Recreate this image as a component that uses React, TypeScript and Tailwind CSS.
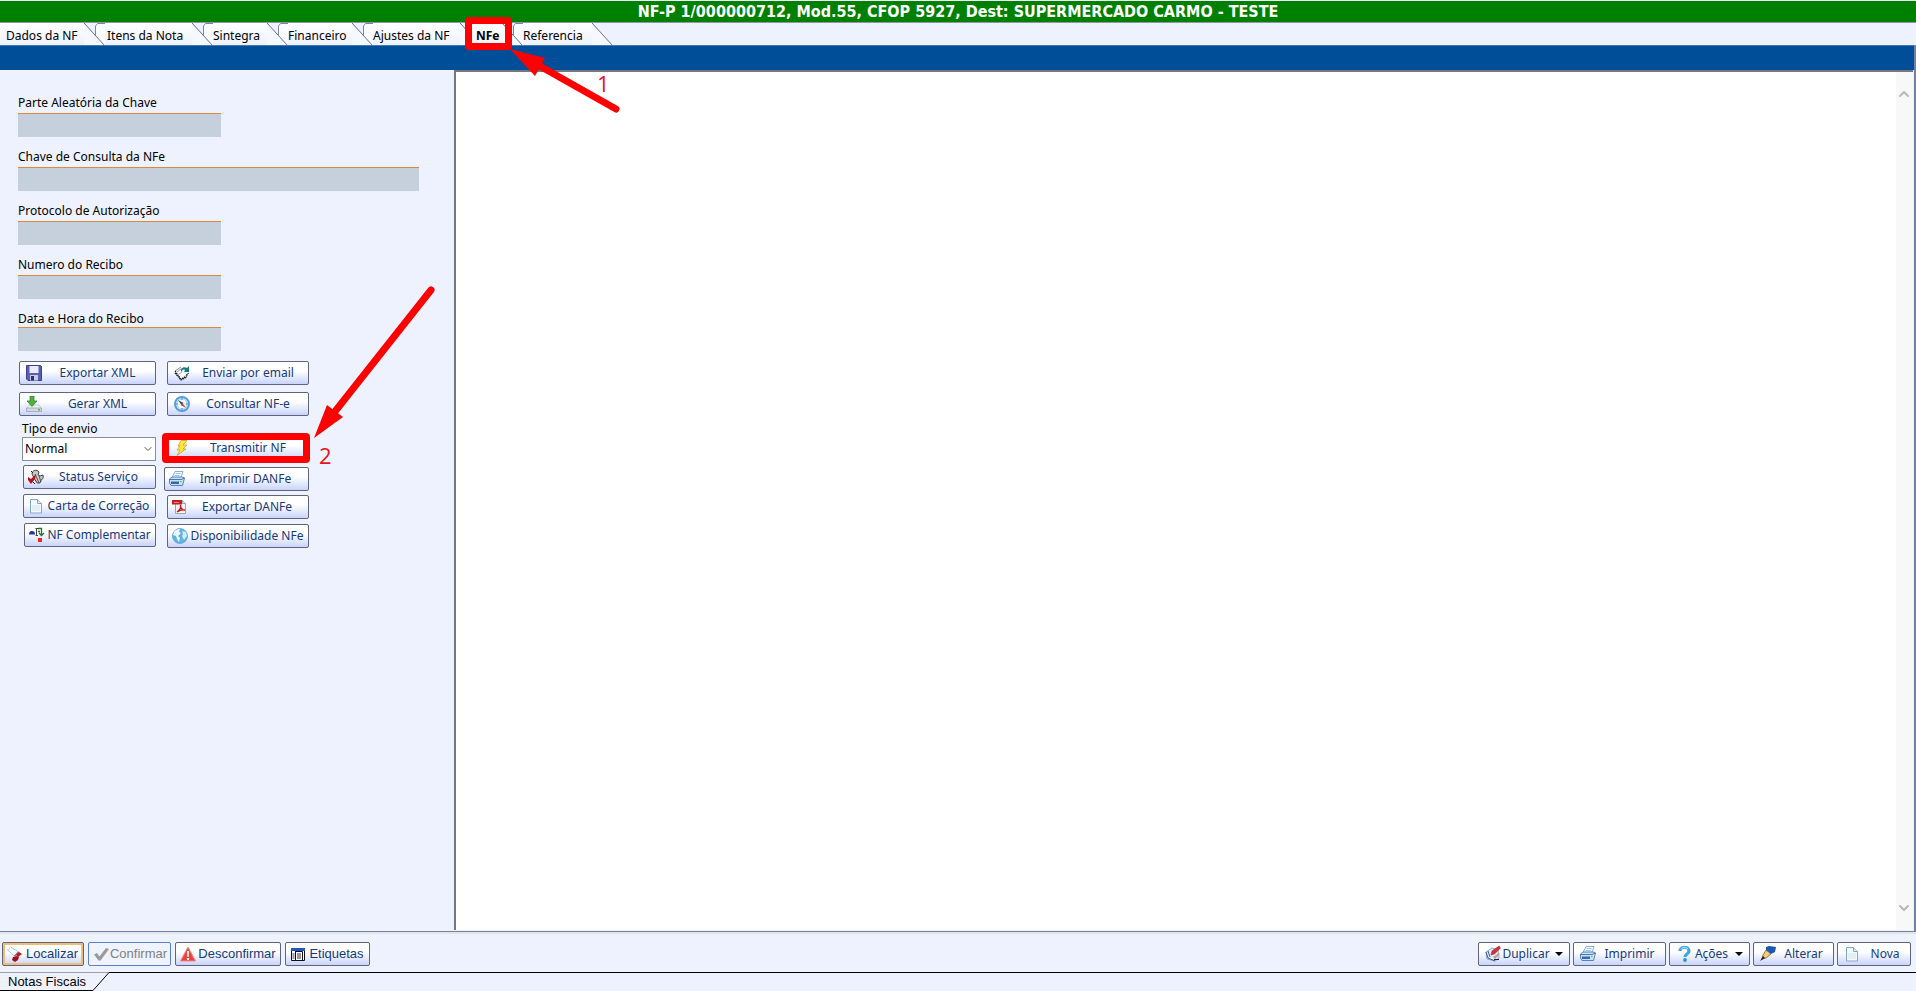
import React from "react";
import { ChevronDown, ChevronUp } from "lucide-react";
import clsx from "clsx";

const uiFont = "font-['Noto_Sans','DejaVu_Sans_Condensed',sans-serif]";
const titleFont = "font-['DejaVu_Sans_Condensed','DejaVu_Sans',sans-serif]";
const arial = "font-['Liberation_Sans',sans-serif]";

interface IconProps {
  children: React.ReactNode;
}

function Icon({ children }: IconProps) {
  return (
    <svg className="h-4 w-4 shrink-0" viewBox="0 0 16 16" aria-hidden="true">
      {children}
    </svg>
  );
}

const SaveIcon = () => (
  <Icon>
    <path d="M.5.500h14l1 1v14H2l-1.500-1.500z" fill="#5a5fb4" stroke="#3d4190" />
    <path d="M3.500 1h9v7h-9z" fill="#e9ecf8" />
    <path d="M4 10h8v5.500H4z" fill="#c9cde0" />
    <path d="M5 11h3v4.500H5z" fill="#2b2f70" />
  </Icon>
);

const MailIcon = () => (
  <Icon>
    <path d="M1 6l6-4 2 1-1 5 3 1 3 1-7 4z" fill="#fff" />
    <path d="M1 6l6-4" stroke="#888" fill="none" />
    <path d="M1 6l6 8 7-4M1 8l6 7 6-3" stroke="#1c1c1c" strokeWidth="1.200" fill="none" strokeDasharray="1.500 .7" />
    <path d="M3 7l4-3M5 9l3-2" stroke="#9aa" fill="none" />
    <path d="M7 4c2-2 4-2 6-1l2-2v6h-5l1-2c-2-1-3 0-3 2-1-1-2-2-1-3z" fill="#1b7a80" />
    <path d="M12 10l3-2" stroke="#333" />
  </Icon>
);

const DownloadIcon = () => (
  <Icon>
    <path d="M3 9h10l2.500 3.500H.5z" fill="#f0f2f5" stroke="#b9c0ca" strokeWidth=".8" />
    <path d="M.5 12h15v3.500H.5z" fill="#d4d9e0" stroke="#9aa3af" strokeWidth=".8" />
    <path d="M12 13h2v1.500h-2z" fill="#4bb54b" />
    <path d="M4 0h4v5h3L6 10.500 1 5h3z" fill="#4cb53c" stroke="#237a1e" strokeWidth=".7" />
  </Icon>
);

const CompassIcon = () => (
  <Icon>
    <circle cx="8" cy="8" r="7" fill="#d9ecfb" stroke="#559fd8" strokeWidth="2" />
    <circle cx="8" cy="8" r="5" fill="#f8fcff" stroke="#9cc6e8" strokeWidth=".7" />
    <path d="M4 4l5.500 3-2 2z" fill="#27486f" />
    <path d="M12 12L6.500 9l2-2z" fill="#b64b43" />
    <path d="M8 2v2M8 12v2M2 8h2M12 8h2" stroke="#3f87c4" />
  </Icon>
);

const BoltIcon = () => (
  <Icon>
    <path d="M7 .5h6L9 5h4l-4 4h3l-9 6.500L6 10H3l3-4H4z" fill="#fde64a" stroke="#cfa31a" strokeWidth=".8" />
  </Icon>
);

const ToolsIcon = () => (
  <Icon>
    <path d="M4 5c0-4 5-5 7-2l-1 3 2 1 3-1c1 3-1 5-2 5l-1 3H9L6 9z" fill="#c8c8c8" stroke="#333" strokeWidth=".9" />
    <path d="M7 5l4 9M11 7l2 6" stroke="#555" />
    <path d="M0 8l3 2 5-5-1 5-4 5-3-4z" fill="#b3121d" />
    <path d="M5 13l2 2M3 2l2 2" stroke="#222" />
  </Icon>
);

const PrinterIcon = () => (
  <Icon>
    <path d="M6 .5h8l-2 6H3z" fill="#f7fbff" stroke="#6b9bd1" strokeWidth=".8" />
    <path d="M6.500 2.500h5M5.500 4.500h5" stroke="#86b2df" strokeWidth=".8" />
    <path d="M3 6h10l2.500 1-2 7.500H2L.5 12V8z" fill="#c9e0f7" stroke="#4379b8" strokeWidth=".9" />
    <path d="M.5 8.500H12L15.500 7" stroke="#3a6da9" fill="none" strokeWidth=".9" />
    <path d="M2 10.500h8v2.500H2z" fill="#3568ab" />
    <path d="M11 10h1.500v1H11z" fill="#62c04b" />
  </Icon>
);

const PageIcon = () => (
  <Icon>
    <path d="M2.500 1.500h7l4 4v9.500h-11z" fill="#f5fafd" stroke="#7fa9c6" />
    <path d="M9.500 1.500v4h4" fill="#d5e7f3" stroke="#7fa9c6" />
    <path d="M4 8h8M4 10h8M4 12h8" stroke="#d3e3ee" />
  </Icon>
);

const PdfIcon = () => (
  <Icon>
    <path d="M3.500 1.500h7l3 3v10h-10z" fill="#f4f4f4" stroke="#a3a3a3" />
    <path d="M10.500 1.500v3h3" fill="#ddd" stroke="#a3a3a3" />
    <path d="M0 1h10v4.500H0z" fill="#c71c22" />
    <path d="M2 3.500h5" stroke="#e8898c" fill="none" />
    <path d="M5 13c3-2 4-5 3.500-7-.5 3 2 5 4.500 5-2-.500-5 0-8 2z" fill="none" stroke="#c0141d" strokeWidth="1.300" />
  </Icon>
);

const BranchIcon = () => (
  <Icon>
    <path d="M0 7.500C0 5 1 4 3 4s3 1 3 3.500z" fill="#2433a0" />
    <path d="M7.500 1.500v7M6.500 1.500H9M6.500 8.500H9" stroke="#444" fill="none" />
    <path d="M9 1.500h3.500v6M10 6l2.500 2.500L15 6M9 4.500h2" fill="none" stroke="#22702c" strokeWidth="1.300" />
    <path d="M9 11h4v4H9z" fill="#f0261c" />
  </Icon>
);

const GlobeIcon = () => (
  <Icon>
    <circle cx="8" cy="8" r="7.600" fill="#62b3e2" stroke="#4a9ccf" strokeWidth=".6" />
    <path d="M2 4c2-3 5-3 6-3L7 4l2 1-3 3 2 2-1 4-2-3-1-3-3-1z" fill="#ecf8fd" />
    <path d="M10 3l4 1 1 4-3 4-2-4 1-2z" fill="#d0ecf7" />
  </Icon>
);

const FlashlightIcon = () => (
  <Icon>
    <path d="M3.500 1L.5 4l7 6 4-4z" fill="#fff" stroke="#8fb4d4" strokeDasharray="2 .6" />
    <path d="M7.500 10l4-4" stroke="#777" strokeWidth="1.500" />
    <path d="M9 9l3-3 3 2-4 3z" fill="#c5131d" />
    <path d="M6 11l4-1 2 1-1 3-3 2-3-2z" fill="#a30f17" />
  </Icon>
);

const CheckIcon = () => (
  <Icon>
    <path d="M1 8.500l3-1.500 2.500 3.500L13 2l3 1-8.500 11.500H5.500z" fill="#9a9a9a" />
  </Icon>
);

const AlertIcon = () => (
  <Icon>
    <path d="M8 1l7.500 14H.5z" fill="#e8443d" stroke="#ef8a84" strokeWidth="1" strokeLinejoin="round" />
    <path d="M7 5h2l-.4 6H7.400zM7 12h2v2H7z" fill="#fff" />
  </Icon>
);

const TableIcon = () => (
  <Icon>
    <path d="M1.500 2.500h13v12h-13z" fill="#fff" stroke="#111" />
    <path d="M1 2h14v3H1z" fill="#1f55c8" />
    <path d="M5.500 5v9M5.500 5.500h7v9" stroke="#111" fill="none" />
    <path d="M7 8h4M7 10h4M7 12h4M2.500 8h2M2.500 10h2M2.500 12h2" stroke="#333" />
  </Icon>
);

const DuplicateIcon = () => (
  <Icon>
    <path d="M1 6l6-4 6 2 1 8-4 3-8-2z" fill="#e3edf8" stroke="#7f9cc2" strokeWidth=".9" />
    <path d="M1 6l2 6 7 3M3 5l2 6" stroke="#33619c" fill="none" />
    <path d="M6 9l1-4 7-5 1.500 2-6 6z" fill="#d1313a" stroke="#9a1a21" strokeWidth=".5" />
    <path d="M8 11l6-4 1 1-5 5z" fill="#b3a0a0" />
    <path d="M9 13.500h5" stroke="#222" />
  </Icon>
);

const QuestionIcon = () => (
  <Icon>
    <path d="M4 5c0-5 9-5 9 0 0 3-4 3-4 6" fill="none" stroke="#3fa6e2" strokeWidth="3.200" />
    <circle cx="9" cy="14" r="1.900" fill="#2e90d0" />
    <path d="M5 3c1-2 5-2 7 0" fill="none" stroke="#c4e8fa" strokeWidth="1" />
  </Icon>
);

const PencilIcon = () => (
  <Icon>
    <path d="M6 1l3-1 7 1-1 5-4 2-5-4z" fill="#1b57b5" />
    <path d="M6 4l5 4-5 4-4 1 1-4z" fill="#f1cf7a" stroke="#5d4a1d" strokeWidth=".7" />
    <path d="M0 15l3-5 2 2z" fill="#222" />
  </Icon>
);

interface ButtonProps {
  label: string;
  icon: React.ReactNode;
  className?: string;
  menu?: boolean;
  disabled?: boolean;
}

function ToolButton({ label, icon, className, menu, disabled }: ButtonProps) {
  return (
    <button
      type="button"
      disabled={disabled}
      className={clsx(
        "flex h-6 items-center rounded-xs border whitespace-nowrap",
        disabled
          ? "border-[#5b7fcb] bg-[#eff3fe] text-[#808080]"
          : "border-[#62647c] bg-linear-to-b from-white from-40% to-[#c9d4fb] text-[#15397a]",
        className
      )}
    >
      {icon}
      <span className="flex-1 text-center">{label}</span>
      {menu && (
        <span className="ml-1 border-x-4 border-t-4 border-x-transparent border-t-black" />
      )}
    </button>
  );
}

interface FieldProps {
  id: string;
  label: string;
  wide?: boolean;
  tight?: boolean;
}

function Field({ id, label, wide, tight }: FieldProps) {
  return (
    <div className="flex flex-col items-start">
      <label htmlFor={id} className={clsx("leading-4", !tight && "mb-0.5")}>
        {label}
      </label>
      <input
        id={id}
        readOnly
        className={clsx(
          "h-6 border-t border-[#d98a3c] bg-[#c5d0dc] px-1 outline-none",
          wide ? "w-[401px]" : "w-[203px]"
        )}
      />
    </div>
  );
}

// slanted edge that closes one tab and opens the next
function TabEdge({ last, covered }: { last?: boolean; covered?: boolean }) {
  return (
    <svg
      className={clsx("h-[23px] shrink-0", covered ? "w-2.5" : "w-[21px]")}
      viewBox={covered ? "0 0 10 23" : "0 0 21 23"}
      aria-hidden="true"
    >
      <path d="M0 0L21 23H0z" fill="#f6f8ff" />
      {!last && <path d="M21 0H13l-2 2v10L21 23z" fill="#fbfcff" />}
      {!last && <path d="M21 .5H13.500L11.500 3v9" fill="none" stroke="#7d8799" />}
      <path d="M0 0L21 23" stroke="#66708a" fill="none" />
    </svg>
  );
}

const tabs = [
  { label: "Dados da NF", width: "w-[84px] pl-1.5" },
  { label: "Itens da Nota", width: "w-[87px] pl-0.5" },
  { label: "Sintegra", width: "w-[54px]" },
  { label: "Financeiro", width: "w-16" },
  { label: "Ajustes da NF", width: "w-[87px]" },
  { label: "NFe", width: "w-8 pl-1.5 font-bold", active: true },
  { label: "Referencia", width: "w-[69px]" },
];

function Tabs() {
  return (
    <nav role="tablist" className="flex h-[23px] border-t border-[#8d97a8] bg-[#eef2fe]">
      {tabs.map((tab, index) => (
        <React.Fragment key={tab.label}>
          <button
            type="button"
            role="tab"
            aria-selected={!!tab.active}
            className={clsx(
              "relative shrink-0 bg-linear-to-b from-white to-[#eef2fe] pt-1 text-left whitespace-nowrap",
              tab.width
            )}
          >
            {tab.label}
            {tab.active && (
              <span className="absolute -top-1.5 -left-[5px] z-10 h-[33px] w-[47px] rounded-sm border-[7px] border-[#fe0000]" />
            )}
          </button>
          <TabEdge last={index === tabs.length - 1} covered={index === 4} />
        </React.Fragment>
      ))}
    </nav>
  );
}

function SidePanel() {
  return (
    <aside className="w-[454px] shrink-0 pt-[25px] pl-[18px]">
      <div className="flex flex-col gap-3">
        <Field id="parte" label="Parte Aleatória da Chave" />
        <Field id="chave" label="Chave de Consulta da NFe" wide />
        <Field id="protocolo" label="Protocolo de Autorização" />
        <Field id="recibo" label="Numero do Recibo" />
        <Field id="data" label="Data e Hora do Recibo" tight />
      </div>

      <div className="mt-2.5 flex">
        <div className="flex w-[138px] flex-col items-end">
          <ToolButton label="Exportar XML" icon={<SaveIcon />} className="w-[137px] pr-0.5 pl-1.5" />
          <ToolButton label="Gerar XML" icon={<DownloadIcon />} className="mt-[7px] w-[137px] pr-0.5 pl-1.5" />
          <div className="mt-[5px] flex w-[134px] flex-col">
            <label htmlFor="tipo" className="leading-4">
              Tipo de envio
            </label>
            <div className="relative">
              <select
                id="tipo"
                className="h-6 w-full appearance-none border border-[#8a8f9c] bg-white px-0.5 text-black outline-none"
              >
                <option>Normal</option>
              </select>
              <ChevronDown className="pointer-events-none absolute top-1.5 right-0.5 h-3 w-3 text-[#555]" strokeWidth={2} />
            </div>
          </div>
          <ToolButton label="Status Serviço" icon={<ToolsIcon />} className="mt-1 w-[133px] pr-0.5 pl-1" />
          <ToolButton label="Carta de Correção" icon={<PageIcon />} className="mt-[5px] w-[133px] pr-0.5 pl-1" />
          <ToolButton label="NF Complementar" icon={<BranchIcon />} className="mt-[5px] w-[132px] pr-0.5 pl-1" />
        </div>

        <div className="flex w-[153px] flex-col items-end">
          <ToolButton label="Enviar por email" icon={<MailIcon />} className="w-[142px] pr-0.5 pl-1.5" />
          <ToolButton label="Consultar NF-e" icon={<CompassIcon />} className="mt-[7px] w-[142px] pr-0.5 pl-1.5" />
          <div className="relative mt-5">
            <ToolButton label="Transmitir NF" icon={<BoltIcon />} className="w-[142px] pr-0.5 pl-1.5" />
            <span className="pointer-events-none absolute -top-[3px] -left-[5px] h-[30px] w-[148px] rounded-sm border-[7px] border-[#fe0000]" />
          </div>
          <ToolButton label="Imprimir DANFe" icon={<PrinterIcon />} className="mt-[7px] w-[145px] pr-0.5 pl-1" />
          <ToolButton label="Exportar DANFe" icon={<PdfIcon />} className="mt-1 w-[142px] pr-0.5 pl-1" />
          <ToolButton label="Disponibilidade NFe" icon={<GlobeIcon />} className="mt-[5px] w-[142px] pr-0.5 pl-1" />
        </div>
      </div>
    </aside>
  );
}

function Memo() {
  return (
    <div className="flex min-w-0 flex-1 border-t-2 border-l-2 border-[#74777d] bg-white">
      <textarea aria-label="Retorno" readOnly className="min-w-0 flex-1 resize-none outline-none" />
      <div className="flex w-[17px] flex-col justify-between bg-[#f8f8f8] pt-3.5 pb-3.5 text-[#b9b9b9]">
        <button type="button" aria-label="Rolar para cima" className="flex">
          <ChevronUp className="h-4 w-4" strokeWidth={3} />
        </button>
        <button type="button" aria-label="Rolar para baixo" className="flex">
          <ChevronDown className="h-4 w-4" strokeWidth={3} />
        </button>
      </div>
    </div>
  );
}

function Arrows() {
  return (
    <>
      <svg className="pointer-events-none absolute top-0 left-0 z-20 h-[460px] w-[640px]" viewBox="0 0 640 460" aria-hidden="true">
        <g fill="#fe0000" stroke="#fe0000">
          <path d="M538 65L616 109" strokeWidth="7" strokeLinecap="round" />
          <path d="M510 49L545 58L535 76z" stroke="none" />
          <path d="M333 414L431 290" strokeWidth="7" strokeLinecap="round" />
          <path d="M314 438L327 405L343 417z" stroke="none" />
        </g>
      </svg>
      <span className="absolute top-[71px] left-[597px] font-['Open_Sans',sans-serif] text-[22px] leading-6 text-[#e8141c]">1</span>
      <span className="absolute top-[443px] left-[319px] font-['Open_Sans',sans-serif] text-[22px] leading-6 text-[#e8141c]">2</span>
    </>
  );
}

export default function App() {
  return (
    <div className={clsx("relative flex min-h-screen flex-col bg-[#eef2fe] text-xs text-black", uiFont)}>
      <header className={clsx("mt-px h-[21px] bg-[#008000] text-center text-base leading-[22px] font-bold text-white", titleFont)}>
        NF-P 1/000000712, Mod.55, CFOP 5927, Dest: SUPERMERCADO CARMO - TESTE
      </header>
      <Tabs />

      <main className="flex flex-1 flex-col border-r-2 border-b border-[#7182a5]">
        <div className="h-[25px] border-t border-[#3f78b0] bg-[#004e98]" />
        <div className="flex flex-1 pr-px pb-px">
          <SidePanel />
          <Memo />
        </div>
      </main>

      <footer className="flex h-10 items-start justify-between border-t-2 border-[#e0e4ee] px-0.5 pt-2">
        <div className={clsx("flex gap-1 text-[13px]", arial)}>
          <ToolButton
            label="Localizar"
            icon={<FlashlightIcon />}
            className="w-[82px] pr-0.5 pl-1 ring-2 ring-[#edbd79] ring-inset"
          />
          <ToolButton label="Confirmar" icon={<CheckIcon />} className="w-[83px] pr-0.5 pl-1" disabled />
          <ToolButton label="Desconfirmar" icon={<AlertIcon />} className="w-[106px] pr-0.5 pl-1" />
          <ToolButton label="Etiquetas" icon={<TableIcon />} className="w-[85px] pr-0.5 pl-1" />
        </div>
        <div className="flex gap-[3px] pr-[3px]">
          <ToolButton label="Duplicar" icon={<DuplicateIcon />} className="w-[92px] px-1.5" menu />
          <ToolButton label="Imprimir" icon={<PrinterIcon />} className="w-[93px] pr-0.5 pl-1.5" />
          <ToolButton label="Ações" icon={<QuestionIcon />} className="w-[81px] px-1.5" menu />
          <ToolButton label="Alterar" icon={<PencilIcon />} className="w-[81px] pr-0.5 pl-1.5" />
          <ToolButton label="Nova" icon={<PageIcon />} className="w-[74px] pl-1.5" />
        </div>
      </footer>

      <div className={clsx("flex h-[19px] text-[13px]", arial)}>
        <button
          type="button"
          className="w-[93px] border-t border-b border-t-[#a0a0a0] border-b-black pl-2 text-left leading-4"
        >
          Notas Fiscais
        </button>
        <svg className="h-[19px] w-4" viewBox="0 0 16 19" aria-hidden="true">
          <path d="M0 .5H16" stroke="#a0a0a0" />
          <path d="M0 18.500L16 .5" stroke="#000" />
        </svg>
        <div className="flex-1 border-t border-black" />
      </div>

      <Arrows />
    </div>
  );
}
